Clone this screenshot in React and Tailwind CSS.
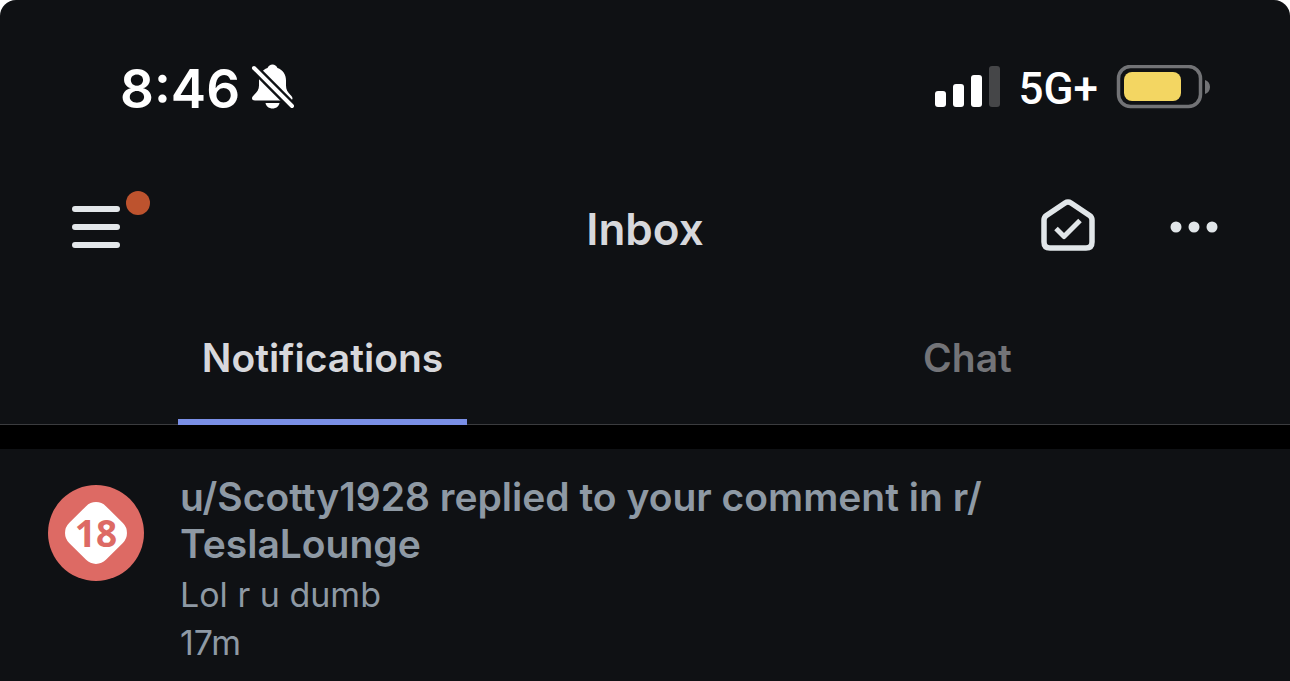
const notifications = [
  {
    id: 1,
    title: 'u/Scotty1928 replied to your comment in r/\u200bTeslaLounge',
    body: 'Lol r u dumb',
    age: '17m',
  },
]

function BellOffIcon() {
  return (
    <svg width="46" height="48" viewBox="0 0 46 48" aria-label="Silent mode" role="img">
      <path
        d="M17.500 5C18.500 2.800 20.300 1.500 22.500 1.500s4 1.300 5 3.500c5.500 2 8.500 6.500 8.500 12.500v5c0 4 1.500 6.500 4.500 9.500 1.500 1.500 2 2.500 2 3.300 0 1.400-1 2.200-2.500 2.200H5C3.200 37.500 2 36.700 2 35.300c0-1.200.6-2 2-3.300 3-3 5-5.500 5-9.500v-5C9 11.500 12 7 17.500 5z"
        fill="#fff"
      />
      <path d="M15.500 40h14c-.6 3.400-3.400 5.500-7 5.500s-6.400-2.100-7-5.500z" fill="#fff" />
      <path d="M0 1l46 46" stroke="#0f1114" strokeWidth="9" />
      <path d="M4 5l38 38" stroke="#fff" strokeWidth="4" strokeLinecap="round" />
    </svg>
  )
}

function SignalIcon() {
  return (
    <svg width="66" height="42" viewBox="0 0 66 42" aria-label="Signal strength" role="img">
      <rect x="0" y="25" width="11" height="16" rx="3" fill="#fff" />
      <rect x="18" y="18" width="11" height="23" rx="3" fill="#fff" />
      <rect x="36" y="9" width="11" height="32" rx="3" fill="#fff" />
      <rect x="54" y="0" width="11" height="41" rx="3" fill="#454648" />
    </svg>
  )
}

function BatteryIcon() {
  return (
    <svg width="94" height="44" viewBox="0 0 94 44" aria-label="Battery" role="img">
      <rect x="2.500" y="1.500" width="82" height="40" rx="12" fill="none" stroke="#727376" strokeWidth="3.500" />
      <rect x="8" y="7" width="57" height="29" rx="8" fill="#f3d662" />
      <path d="M89 15c3 1 5 3.500 5 7s-2 6-5 7z" fill="#727376" />
    </svg>
  )
}

function StatusBar() {
  return (
    <div className="flex h-[174px] items-center justify-between pl-[120px] pr-20 text-white">
      <div className="flex items-center gap-2.5">
        <time className="pt-1 text-[53px] leading-[64px] font-semibold">8:46</time>
        <BellOffIcon />
      </div>
      <div className="flex items-center gap-[18px]">
        <SignalIcon />
        <span className="pt-1 font-['Roboto',sans-serif] text-[44px] leading-[48px] font-medium">5G+</span>
        <BatteryIcon />
      </div>
    </div>
  )
}

function Header() {
  return (
    <header className="grid h-[106px] grid-cols-3 items-center px-[72px]">
      <button type="button" aria-label="Open menu" className="justify-self-start">
        <svg width="80" height="72" viewBox="0 0 80 72" fill="none">
          <path d="M3 18h42M3 36h42M3 54h42" stroke="#e3e7ea" strokeWidth="6" strokeLinecap="round" />
          <circle cx="66" cy="12" r="12" fill="#bd532e" />
        </svg>
      </button>
      <h1 className="pt-1 text-center text-[44px] leading-[48px] font-semibold text-[#d7d8dc]">Inbox</h1>
      <div className="flex items-center gap-[74px] justify-self-end">
        <button type="button" aria-label="Mark all as read">
          <svg width="56" height="56" viewBox="0 0 56 56" fill="none" stroke="#e1e6e9" strokeLinejoin="round">
            <path
              d="M4 21c0-2 .8-3.400 2.400-4.500L25 4c2-1.300 4-1.300 6 0l18.600 12.500c1.600 1.100 2.400 2.500 2.400 4.500v22c0 4-2 6-6 6H10c-4 0-6-2-6-6z"
              strokeWidth="5.500"
            />
            <path d="M16 29.500l8 8L40 21.500" strokeWidth="5" />
          </svg>
        </button>
        <button type="button" aria-label="More options">
          <svg width="48" height="12" viewBox="0 0 48 12" fill="#e1e6e9">
            <circle cx="6" cy="6" r="5.500" />
            <circle cx="24" cy="6" r="5.500" />
            <circle cx="42" cy="6" r="5.500" />
          </svg>
        </button>
      </div>
    </header>
  )
}

function Tabs() {
  return (
    <nav className="grid grid-cols-2 justify-items-center border-b border-[#3b3c3f] text-[39px] leading-[48px] font-semibold">
      <button
        type="button"
        aria-current="page"
        className="-mb-px border-b-6 border-[#7a8fe6] px-6 pt-[54px] pb-[37px] text-[#d7d8dc]"
      >
        Notifications
      </button>
      <button type="button" className="-mb-px border-b-6 border-transparent px-6 pt-[54px] pb-[37px] text-[#737478]">
        Chat
      </button>
    </nav>
  )
}

function Avatar() {
  return (
    <svg width="96" height="96" viewBox="0 0 96 96" className="mt-3 shrink-0" aria-hidden="true">
      <circle cx="48" cy="48" r="48" fill="#dd6a64" />
      <rect x="22" y="22" width="52" height="52" rx="14" fill="#fff" transform="rotate(45 48 48)" />
      <text
        x="48"
        y="62"
        textAnchor="middle"
        fontSize="37"
        fontWeight="700"
        fill="#dd6a64"
        className="font-['Open_Sans',sans-serif]"
      >
        18
      </text>
    </svg>
  )
}

function NotificationItem({ item }) {
  return (
    <li className="flex gap-9 px-12 pt-6">
      <Avatar />
      <div className="max-w-[840px] text-[#8e99a4]">
        <h2 className="text-[39px] leading-[47px] font-semibold">{item.title}</h2>
        <p className="mt-1 text-[34px] leading-[48px]">{item.body}</p>
        <p className="text-[34px] leading-[48px]">{item.age}</p>
      </div>
    </li>
  )
}

export default function App() {
  return (
    <div className="bg-white">
      <div className="min-h-screen rounded-t-2xl bg-[#0f1114] font-['Inter',sans-serif]">
        <StatusBar />
        <Header />
        <Tabs />
        <div className="h-6 bg-black" />
        <ul>
          {notifications.map((item) => (
            <NotificationItem key={item.id} item={item} />
          ))}
        </ul>
      </div>
    </div>
  )
}
